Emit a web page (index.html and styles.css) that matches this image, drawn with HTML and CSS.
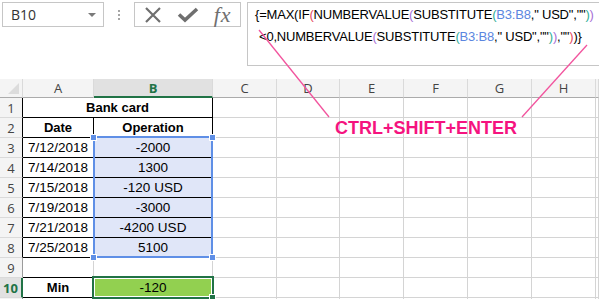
FILE: index.html
```html
<!DOCTYPE html>
<html lang="en">
<head>
  <meta charset="UTF-8">
  <title>Bank card – array formula</title>
  <link rel="stylesheet" href="styles.css">
</head>
<body>

  <div class="barra">
    <div class="nombre">
      <span>B10</span>
      <span class="flecha"></span>
    </div>
    <div class="puntos"><i></i><i></i><i></i></div>
    <div class="iconos">
      <span class="ico">
        <svg width="18" height="18" viewBox="0 0 18 18"><path d="M2 2 L16 16 M16 2 L2 16" stroke="#6f6f6f" stroke-width="2.2" fill="none"/></svg>
      </span>
      <span class="ico">
        <svg width="22" height="16" viewBox="0 0 22 16"><path d="M2 7.5 L8 13 L20 2" stroke="#6f6f6f" stroke-width="3.6" fill="none"/></svg>
      </span>
      <span class="ico fx">fx</span>
    </div>
    <div class="formula">
      <div>{=MAX(IF<span class="p1">(</span>NUMBERVALUE<span class="p2">(</span>SUBSTITUTE<span class="p3">(</span><span class="rf">B3:B8</span>," USD",""<span class="p3">)</span><span class="p2">)</span></div>
      <div class="l2">&lt;0,NUMBERVALUE<span class="p2">(</span>SUBSTITUTE<span class="p3">(</span><span class="rf">B3:B8</span>," USD",""<span class="p3">)</span><span class="p2">)</span>,""<span class="p1">)</span>)}</div>
    </div>
  </div>

  <div class="hoja-wrap">
    <div class="hoja">
      <div class="col esquina"></div>
      <div class="col">A</div>
      <div class="col on">B</div>
      <div class="col">C</div>
      <div class="col">D</div>
      <div class="col">E</div>
      <div class="col">F</div>
      <div class="col">G</div>
      <div class="col">H</div>
      <div class="col"></div>

      <div class="fila borde">1</div>
      <div class="dos neg br bb">Bank card</div>
      <div></div><div></div><div></div><div></div><div></div><div></div><div></div>

      <div class="fila borde">2</div>
      <div class="neg br bb">Date</div>
      <div class="neg br bb">Operation</div>
      <div></div><div></div><div></div><div></div><div></div><div></div><div></div>

      <div class="fila borde">3</div>
      <div class="br bb">7/12/2018</div>
      <div class="sel br bb">-2000</div>
      <div></div><div></div><div></div><div></div><div></div><div></div><div></div>

      <div class="fila borde">4</div>
      <div class="br bb">7/14/2018</div>
      <div class="sel br bb">1300</div>
      <div></div><div></div><div></div><div></div><div></div><div></div><div></div>

      <div class="fila borde">5</div>
      <div class="br bb">7/15/2018</div>
      <div class="sel br bb">-120 USD</div>
      <div></div><div></div><div></div><div></div><div></div><div></div><div></div>

      <div class="fila borde">6</div>
      <div class="br bb">7/19/2018</div>
      <div class="sel br bb">-3000</div>
      <div></div><div></div><div></div><div></div><div></div><div></div><div></div>

      <div class="fila borde">7</div>
      <div class="br bb">7/21/2018</div>
      <div class="sel br bb">-4200 USD</div>
      <div></div><div></div><div></div><div></div><div></div><div></div><div></div>

      <div class="fila borde">8</div>
      <div class="br bb">7/25/2018</div>
      <div class="sel br bb">5100</div>
      <div></div><div></div><div></div><div></div><div></div><div></div><div></div>

      <div class="fila">9</div>
      <div class="bb"></div>
      <div></div>
      <div></div><div></div><div></div><div></div><div></div><div></div><div></div>

      <div class="fila on">10</div>
      <div class="neg br bb">Min</div>
      <div class="verde br bb">-120</div>
      <div></div><div></div><div></div><div></div><div></div><div></div><div></div>

      <div class="fila"></div>
      <div></div><div></div>
      <div></div><div></div><div></div><div></div><div></div><div></div><div></div>
    </div>

    <div class="rango"></div>
    <div class="asa" style="left: 90px; top: 55px;"></div>
    <div class="asa" style="left: 209px; top: 55px;"></div>
    <div class="asa" style="left: 90px; top: 175px;"></div>
    <div class="asa" style="left: 209px; top: 175px;"></div>
    <div class="activa"></div>
    <div class="relleno"></div>
  </div>

  <svg class="flechas" width="599" height="299" viewBox="0 0 599 299">
    <line x1="259" y1="30" x2="329" y2="117" />
    <line x1="587" y1="45" x2="522" y2="117" />
  </svg>
  <div class="atajo">CTRL+SHIFT+ENTER</div>

</body>
</html>
```

FILE: styles.css
```css
body {
  margin: 0;
  width: 599px;
  height: 299px;
  overflow: hidden;
  background: #fff;
  font-family: 'Liberation Sans', Arial, sans-serif;
  position: relative;
}

/* barra de fórmulas */
.barra {
  display: flex;
  align-items: flex-start;
  padding: 2px 0 0 2px;
}

.nombre {
  width: 102px;
  height: 25px;
  box-sizing: border-box;
  border: 1px solid #c6c6c6;
  display: flex;
  align-items: center;
  justify-content: space-between;
  padding: 0 7px 0 8px;
  font-family: 'Open Sans', sans-serif;
  font-size: 14px;
  color: #333;
}

.flecha {
  width: 0;
  height: 0;
  border-left: 4px solid transparent;
  border-right: 4px solid transparent;
  border-top: 4px solid #7a7a7a;
}

.puntos {
  width: 30px;
  height: 25px;
  display: flex;
  flex-direction: column;
  align-items: center;
  justify-content: center;
  gap: 2px;
}

.puntos i {
  width: 2px;
  height: 2px;
  background: #a6a6a6;
}

.iconos {
  width: 107px;
  height: 25px;
  box-sizing: border-box;
  border: 1px solid #c6c6c6;
  display: flex;
  align-items: center;
  padding-left: 1px;
}

.ico {
  width: 35px;
  display: flex;
  justify-content: center;
  align-items: center;
}

.fx {
  font-family: 'Liberation Serif', serif;
  font-style: italic;
  font-size: 22px;
  letter-spacing: 1px;
  color: #6f6f6f;
  line-height: 25px;
}

.formula {
  flex: 1;
  height: 64px;
  margin-left: 6px;
  margin-right: -4px;
  box-sizing: border-box;
  border: 1px solid #c6c6c6;
  padding: 1px 0 0 7px;
  font-size: 13px;
  letter-spacing: -0.2px;
  line-height: 22px;
  color: #000;
  white-space: nowrap;
}

.formula .l2 {
  padding-left: 4px;
}

.p1 { color: #e4485e; }
.p2 { color: #a76fd6; }
.p3 { color: #2fae98; }
.rf { color: #5b86e0; }

/* hoja */
.hoja-wrap {
  position: relative;
  margin-top: 13px;
}

.hoja {
  display: grid;
  grid-template-columns: 23px 71px 119px 64px 63px 64px 64px 64px 64px 1fr;
  grid-template-rows: 19px;
  grid-auto-rows: 20px;
}

.hoja > div {
  box-sizing: border-box;
  border-right: 1px solid #d4d4d4;
  border-bottom: 1px solid #d4d4d4;
  display: flex;
  align-items: center;
  justify-content: center;
  font-size: 13.5px;
  color: #000;
  white-space: nowrap;
}

.hoja > .col {
  background: #f4f4f4;
  border-right-color: #dadada;
  border-bottom-color: #ababab;
  font-family: 'Open Sans', sans-serif;
  font-size: 13px;
  color: #444;
}

.hoja > .col.on {
  background: #e1e1e1;
  border-bottom: 2px solid #217346;
  color: #217346;
  font-weight: bold;
}

.esquina {
  position: relative;
}

.esquina::after {
  content: "";
  position: absolute;
  right: 3px;
  bottom: 3px;
  border-left: 11px solid transparent;
  border-bottom: 11px solid #dcdcdc;
}

.hoja > .fila {
  background: #f4f4f4;
  border-right-color: #9b9b9b;
  border-bottom-color: #dadada;
  font-family: 'Open Sans', sans-serif;
  font-size: 13px;
  color: #444;
}

.hoja > .fila.borde {
  border-right-color: #000;
}

.hoja > .fila.on {
  background: #e1e1e1;
  border-right: 2px solid #217346;
  color: #217346;
  font-weight: bold;
}

.dos {
  grid-column: span 2;
}

.neg {
  font-weight: bold;
  font-size: 13px !important;
}

.hoja > .br { border-right-color: #000; }
.hoja > .bb { border-bottom-color: #000; }

.sel {
  background: #e0e6f8;
}

.verde {
  background: #92d050;
}

/* selecciones encima de la hoja */
.rango {
  position: absolute;
  left: 93px;
  top: 57px;
  width: 120px;
  height: 122px;
  box-sizing: border-box;
  border: 2px solid #5f8fe6;
}

.asa {
  position: absolute;
  width: 5px;
  height: 5px;
  background: #5f8fe6;
  border: 1px solid #fff;
}

.activa {
  position: absolute;
  left: 92px;
  top: 197px;
  width: 122px;
  height: 23px;
  box-sizing: border-box;
  border: 2px solid #217346;
  box-shadow: inset 0 0 0 1px #fff;
}

.relleno {
  position: absolute;
  left: 209px;
  top: 215px;
  width: 5px;
  height: 5px;
  background: #217346;
  border: 1px solid #fff;
}

/* anotación */
.flechas {
  position: absolute;
  left: 0;
  top: 0;
  pointer-events: none;
}

.flechas line {
  stroke: #f2549e;
  stroke-width: 1.3;
}

.atajo {
  position: absolute;
  left: 335px;
  top: 119px;
  font-size: 18px;
  line-height: 18px;
  font-weight: bold;
  color: #f5137f;
}
```
